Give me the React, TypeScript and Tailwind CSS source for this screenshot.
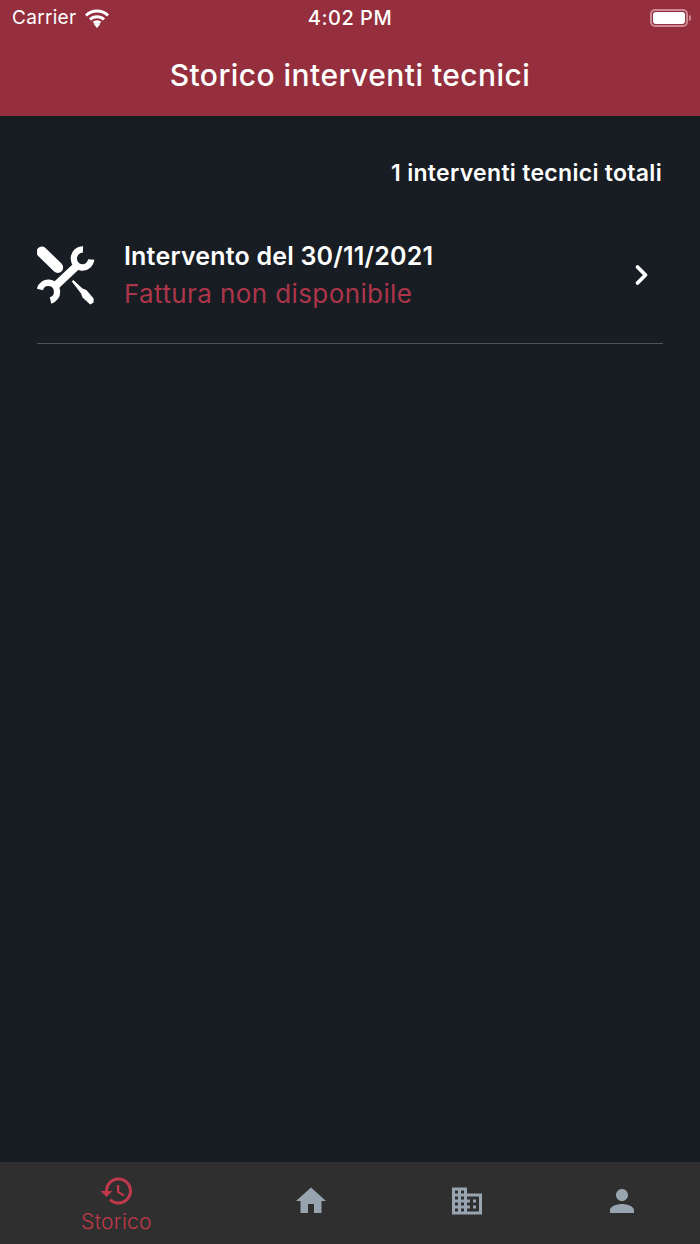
import { MdDomain, MdHistory, MdHome, MdPerson } from 'react-icons/md';

function WifiIcon() {
  return (
    <svg width="26" height="20" viewBox="0 0 26 20" fill="none" stroke="currentColor" strokeWidth="3">
      <path d="M2 7.5a15.5 15.5 0 0 1 22 0" />
      <path d="M6 11.5a10 10 0 0 1 14 0" />
      <path d="M9.7 15a5 5 0 0 1 6.6 0" />
      <path d="M13 20l-3-3.5a4.4 4.4 0 0 1 6 0z" fill="currentColor" stroke="none" />
    </svg>
  );
}

function ToolsIcon() {
  return (
    <svg width="60" height="60" viewBox="0 0 62 60" preserveAspectRatio="none" fill="none" stroke="white">
      {/* screwdriver */}
      <path d="M5 7L21.5 22.5" strokeWidth="11" strokeLinecap="round" />
      <path d="M36 36.5L37.5 35L47 43.5L51 45L58.5 53.5L58.5 57.5L55 59.5L47 52.5L45.5 48.5Z" fill="white" stroke="none" />
      {/* wrench */}
      <path d="M41 21L19 41" strokeWidth="8" />
      <path d="M47.5 4.5A9 9 0 1 0 56 14.5" strokeWidth="6.5" />
      <path d="M3 44.5A9 9 0 1 1 14 55.5" strokeWidth="6.5" />
    </svg>
  );
}

function ChevronIcon() {
  return (
    <svg width="16" height="22" viewBox="0 0 16 22" fill="none" stroke="white" strokeWidth="3.8" strokeLinecap="round" strokeLinejoin="round">
      <path d="M3.5 3L11.5 11L3.5 19" />
    </svg>
  );
}

export default function App() {
  return (
    <div className="flex h-[1244px] w-[700px] flex-col overflow-hidden bg-[#181d24] font-['Inter',sans-serif] text-white">
      <header className="h-[116px] bg-[#952f3d]">
        <div className="grid h-[36px] grid-cols-3 items-center px-3">
          <div className="flex items-center gap-2 text-[19px] tracking-[0.3px]">
            <span>Carrier</span>
            <WifiIcon />
          </div>
          <div className="text-center text-[20px] font-medium tracking-[0.5px]">4:02 PM</div>
          <div className="mr-[-3px] flex items-center justify-end">
            <div className="flex h-[18px] w-[38px] items-center rounded-[5px] border-2 border-[#c98a93] p-[1px]">
              <div className="h-full w-full rounded-[3px] bg-white" />
            </div>
            <div className="ml-[1px] h-[6px] w-[2px] rounded-r-sm bg-[#c98a93]" />
          </div>
        </div>
        <h1 className="mt-[5px] text-center text-[30px] font-medium leading-[68px] tracking-[0.45px]">
          Storico interventi tecnici
        </h1>
      </header>

      <main className="flex-1 px-[37px]">
        <p className="mt-[42px] pr-[1px] text-right text-[23px] font-semibold leading-[30px] tracking-[0.3px]">1 interventi tecnici totali</p>
        <div className="mt-[51px] flex items-center border-b border-[#4e5259] pb-[32px]">
          <ToolsIcon />
          <div className="ml-[27px] flex-1">
            <div className="text-[25px] font-semibold leading-[34px] tracking-[0.2px]">Intervento del 30/11/2021</div>
            <div className="mt-[4px] text-[26px] leading-[34px] tracking-[0.4px] text-[#ac3549]">Fattura non disponibile</div>
          </div>
          <div className="mr-[13px]">
            <ChevronIcon />
          </div>
        </div>
      </main>

      <nav className="flex h-[82px] bg-[#2f2f2f] text-[#98a4af]">
        <div className="flex w-[233px] flex-col items-center pt-[11px] text-[#c0394b]">
          <MdHistory size={36} />
          <span className="text-[21px] font-light leading-[26px] tracking-[0.3px]">Storico</span>
        </div>
        <div className="flex flex-1 items-center justify-center pb-[4px]">
          <MdHome size={36} />
        </div>
        <div className="flex flex-1 items-center justify-center pb-[4px]">
          <MdDomain size={36} />
        </div>
        <div className="flex flex-1 items-center justify-center pb-[4px]">
          <MdPerson size={36} />
        </div>
      </nav>
    </div>
  );
}
